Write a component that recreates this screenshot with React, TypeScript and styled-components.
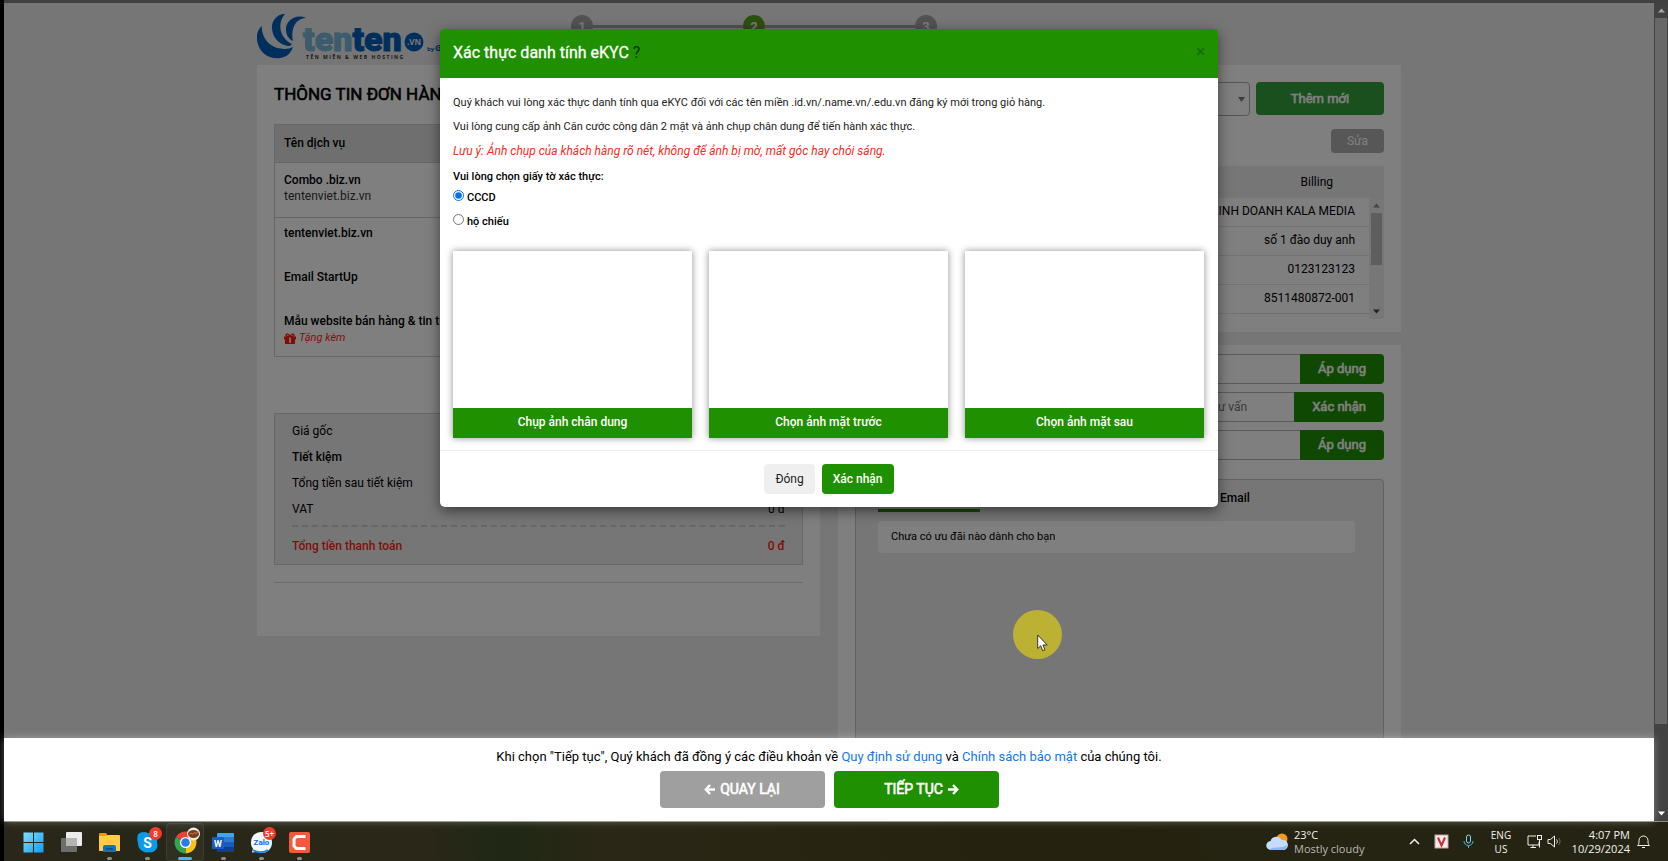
import React from 'react';
import styled, { createGlobalStyle, css } from 'styled-components';

const green = '#1f9000';

/* Regular-width Roboto thickened by an outline */
const thick = css`
  font-weight: 400;
  -webkit-text-stroke: 0.6px currentColor;
`;

const GlobalStyle = createGlobalStyle`
  *, *::before, *::after { box-sizing: border-box; }
  body { margin: 0; background: #000; overflow: hidden; }
  body, button, input, select { font-family: Roboto, "Liberation Sans", sans-serif; }
  p, h1, h2 { margin: 0; }
  button { border: 0; padding: 0; cursor: pointer; }
`;

const Screen = styled.div`
  display: flex;
  flex-direction: column;
  height: 100vh;
  padding-left: 4px;
  background: #000;
`;

const Browser = styled.div`
  position: relative;
  flex: 1;
  min-height: 0;
  display: flex;
  border-top: 3px solid #404040;
  border-bottom: 1px solid #8a8a80;
`;

const Viewport = styled.div`
  position: relative;
  flex: 1;
  min-width: 0;
  display: flex;
  flex-direction: column;
  background: #ececec;
`;

const Page = styled.div`
  flex: 1;
  min-height: 0;
  overflow: hidden;
`;

const Container = styled.div`
  max-width: 1144px;
  margin: 0 auto;
`;

const Header = styled.header`
  display: flex;
  height: 62px;
`;

const Logo = styled.a`
  width: 314px;
  padding-top: 5px;
  svg { display: block; }
`;

const Steps = styled.ol`
  display: flex;
  align-items: center;
  height: 22px;
  margin: 12px 0 0;
  padding: 0;
  list-style: none;
`;

const Step = styled.li<{ $active?: boolean }>`
  width: 22px;
  height: 22px;
  border-radius: 50%;
  background: ${(p) => (p.$active ? '#56a31c' : '#a5a5a5')};
  color: #f4f4f4;
  font-size: 13px;
  font-weight: 700;
  line-height: 23px;
  text-align: center;
`;

const StepLine = styled.li`
  width: 150px;
  height: 3px;
  background: #a5a5a5;
`;

const Columns = styled.main`
  display: flex;
  align-items: flex-start;
  gap: 18px;
`;

const Column = styled.div`
  flex: 1;
  min-width: 0;
  display: flex;
  flex-direction: column;
  gap: 13px;
`;

const OrderPanel = styled.section`
  padding: 18px 17px 53px;
  background: #fff;
`;

const OrderTitle = styled.h1`
  margin-bottom: 19px;
  font-size: 17px;
  line-height: 22px;
  ${thick}
`;

const OrderTable = styled.table`
  width: 100%;
  border: 1px solid #cfcfcf;
  border-spacing: 0;
  font-size: 12px;
  line-height: 16px;
  th {
    height: 38px;
    padding: 0 9px 2px;
    background: #dedede;
    border-bottom: 1px solid #cfcfcf;
    font-weight: 500;
    text-align: left;
  }
  td {
    padding: 9px 9px 13px;
    vertical-align: top;
  }
  tr + tr td { border-top: 1px solid #cfcfcf; padding: 7px 9px 9px; }
`;

const Service = styled.div`
  font-weight: 500;
  & + & { margin-top: 28px; }
`;

const ServiceNote = styled.div`
  color: #333;
  font-weight: 400;
`;

const GiftNote = styled.div`
  display: flex;
  align-items: center;
  gap: 3px;
  color: #ff1f0c;
  font-weight: 400;
  font-size: 11px;
  font-style: italic;
  line-height: 18px;
`;

const Summary = styled.dl`
  margin: 56px 0 17px;
  padding: 4px 17px 0;
  background: #ececec;
  border: 1px solid #cfcfcf;
  font-size: 12px;
`;

const SummaryRow = styled.div<{ $strong?: boolean; $total?: boolean }>`
  display: flex;
  align-items: center;
  justify-content: space-between;
  height: 26px;
  font-weight: ${(p) => (p.$strong ? 500 : 400)};
  dd { margin: 0; }
  ${(p) =>
    p.$total &&
    css`
      height: 39px;
      margin-top: 3px;
      border-top: 2px dashed #cfcfcf;
      color: #ff1f0c;
      font-weight: 500;
    `}
`;

const Rule = styled.hr`
  margin: 0;
  border: 0;
  border-top: 1px solid #d9d9d9;
`;

const ContactPanel = styled.section`
  padding: 17px 17px 13px;
  background: #fff;
`;

const ContactTop = styled.div`
  display: flex;
  gap: 6px;
`;

const Select = styled.select`
  flex: 1;
  height: 34px;
  appearance: none;
  border: 1px solid #aaa;
  border-radius: 4px;
  background: #fff;
`;

const SelectWrap = styled.div`
  position: relative;
  flex: 1;
  display: flex;
`;

const SelectArrow = styled.svg`
  position: absolute;
  right: 5px;
  top: 15px;
  width: 7px;
  height: 5px;
`;

const AddButton = styled.button`
  width: 128px;
  height: 33px;
  border-radius: 4px;
  background: #34a03a;
  color: #fff;
  font-size: 13px;
  ${thick}
`;

const EditButton = styled.button`
  display: block;
  width: 53px;
  height: 24px;
  margin: 13px 0 13px auto;
  border-radius: 4px;
  background: #aeaeae;
  color: #fff;
  font-size: 12px;
`;

const ContactTable = styled.div`
  font-size: 12px;
`;

const ContactHead = styled.div`
  height: 32px;
  padding-right: 51px;
  background: #ececec;
  line-height: 32px;
  text-align: right;
`;

const ContactScroll = styled.div`
  display: flex;
  height: 121px;
  overflow: hidden;
`;

const ContactList = styled.ul`
  flex: 1;
  margin: 0;
  padding: 0;
  list-style: none;
  li {
    height: 29px;
    padding-right: 14px;
    border-bottom: 1px solid #e4e4e4;
    line-height: 27px;
    text-align: right;
  }
`;

const Bar = styled.div<{ $dark?: boolean }>`
  display: flex;
  flex-direction: column;
  align-items: center;
  justify-content: space-between;
  width: ${(p) => (p.$dark ? 14 : 15)}px;
  background: ${(p) => (p.$dark ? '#424242' : '#eee')};
  svg { flex: none; width: 7px; height: 5px; margin: 5px 0; }
`;

const Thumb = styled.div<{ $dark?: boolean }>`
  flex: none;
  width: ${(p) => (p.$dark ? 12 : 11)}px;
  height: ${(p) => (p.$dark ? 'auto' : '52px')};
  margin-bottom: ${(p) => (p.$dark ? 82 : 39)}px;
  background: ${(p) => (p.$dark ? '#686868' : '#bcbcbc')};
  ${(p) => p.$dark && 'flex: 1;'}
`;

const OfferPanel = styled.section`
  padding: 9px 17px 40px;
  background: #fff;
`;

const Codes = styled.div`
  display: grid;
  gap: 8px;
`;

const CodeRow = styled.form`
  display: flex;
  height: 30px;
`;

const CodeInput = styled.input`
  flex: 1;
  min-width: 0;
  padding: 0 47px 0 12px;
  border: 1px solid #b4b4b4;
  border-right: 0;
  border-radius: 4px 0 0 4px;
  background: #fff;
  font-size: 12px;
  text-align: right;
`;

const CodeButton = styled.button`
  padding: 0 18px 1px;
  border-radius: 0 4px 4px 0;
  background: ${green};
  color: #fff;
  font-size: 13px;
  ${thick}
`;

const Offers = styled.div`
  min-height: 300px;
  margin-top: 19px;
  padding: 0 28px 0 22px;
  border: 1px solid #c4c4c4;
  border-radius: 4px;
  background: #ececec;
  font-size: 11px;
`;

const Tabs = styled.div`
  display: flex;
`;

const Tab = styled.button<{ $active?: boolean }>`
  width: 102px;
  height: 32px;
  padding-top: 6px;
  background: none;
  border-bottom: 3px solid ${(p) => (p.$active ? green : 'transparent')};
  font-size: 12px;
  font-weight: 500;
`;

const Offer = styled.p`
  margin-top: 9px;
  padding: 0 13px;
  border-radius: 4px;
  background: #fff;
  line-height: 32px;
`;

const Overlay = styled.div`
  position: absolute;
  inset: 0;
  display: flex;
  justify-content: center;
  align-items: flex-start;
  padding-top: 26px;
  background: rgba(0, 0, 0, 0.5);
`;

const Modal = styled.div`
  width: 778px;
  border-radius: 5px;
  background: #fff;
  box-shadow: 0 4px 13px rgba(0, 0, 0, 0.5);
  font-size: 11px;
  color: #222;
`;

const ModalHead = styled.div`
  display: flex;
  align-items: center;
  justify-content: space-between;
  height: 49px;
  padding: 0 13px 2px;
  border-radius: 4px 4px 0 0;
  background: ${green};
`;

const ModalTitle = styled.h2`
  color: #fff;
  font-size: 16px;
  font-weight: 400;
  -webkit-text-stroke: 0.3px currentColor;
  span { color: #0b3300; -webkit-text-stroke: 0; }
`;

const Close = styled.button`
  height: 24px;
  margin-bottom: 4px;
  background: none;
  color: #176c00;
  font-size: 17px;
  font-weight: 500;
  line-height: 24px;
`;

const ModalBody = styled.div`
  padding: 17px 14px 12px 13px;
  border-bottom: 1px solid #ececec;
`;

const Line = styled.p<{ $warn?: boolean }>`
  margin-bottom: 8px;
  line-height: ${(p) => (p.$warn ? 17 : 16)}px;
  ${(p) => p.$warn && 'color: #f0301c; font-size: 12px; font-style: italic;'}
`;

const Choices = styled.fieldset`
  margin: 0 0 18px;
  padding: 0;
  border: 0;
  font-weight: 500;
  color: #000;
  legend { padding: 0; line-height: 17px; }
  label { display: flex; align-items: center; gap: 3px; height: 24px; }
  input { width: 11px; height: 11px; margin: 0 0 3px; accent-color: #0b6ef6; }
`;

const Cards = styled.div`
  display: flex;
  gap: 17px;
`;

const Card = styled.div`
  flex: 1;
  padding-top: 157px;
  background: #fff;
  box-shadow: 0 0 7px rgba(0, 0, 0, 0.45);
`;

const CardButton = styled.button`
  display: block;
  width: 100%;
  height: 30px;
  padding-bottom: 2px;
  background: ${green};
  color: #fff;
  font-size: 12px;
  font-weight: 500;
`;

const ModalFoot = styled.div`
  display: flex;
  justify-content: center;
  gap: 7px;
  padding: 13px;
`;

const FootButton = styled.button<{ $primary?: boolean }>`
  height: 30px;
  padding: 0 11px;
  border-radius: 4px;
  background: ${(p) => (p.$primary ? green : '#efefef')};
  color: ${(p) => (p.$primary ? '#fff' : '#222')};
  font-size: 12px;
  font-weight: ${(p) => (p.$primary ? 500 : 400)};
`;

const ActionBar = styled.footer`
  position: relative;
  z-index: 1;
  height: 83px;
  padding-top: 10px;
  background: #fff;
  box-shadow: 0 0 8px rgba(255, 255, 255, 0.35);
  font-size: 13px;
  line-height: 18px;
  text-align: center;
  a { color: #1278e8; text-decoration: none; }
`;

const Actions = styled.div`
  display: flex;
  justify-content: center;
  gap: 9px;
  margin-top: 5px;
`;

const ActionButton = styled.button<{ $back?: boolean }>`
  display: flex;
  align-items: center;
  justify-content: center;
  gap: 5px;
  width: 165px;
  height: 37px;
  padding-bottom: 1px;
  padding-left: ${(p) => (p.$back ? 0 : 11)}px;
  border-radius: 4px;
  background: ${(p) => (p.$back ? '#9f9f9f' : green)};
  color: #fff;
  font-size: 14px;
  ${thick}
  svg { fill: none; stroke: currentColor; stroke-width: 2.4; }
`;

const Pointer = styled.div`
  position: absolute;
  z-index: 2;
  left: 1009px;
  top: 607px;
  width: 49px;
  height: 49px;
  border-radius: 50%;
  background: #bcb133;
  svg { position: absolute; left: 24px; top: 24px; }
`;

const Taskbar = styled.div`
  display: flex;
  align-items: center;
  justify-content: space-between;
  height: 39px;
  margin-left: -4px;
  padding: 0 17px 0 10px;
  background: linear-gradient(90deg, #2b2718 0, #262719 8%, #2b2718 25%, #1f2814 30%, #2a2716 36%, #25220f 60%, #252414 100%);
  border-left: 4px solid #000;
  color: #f2f2f2;
  font: 400 11px/14px "Open Sans", sans-serif;
`;

const Apps = styled.div`
  display: flex;
`;

const AppButton = styled.button<{ $open?: boolean; $active?: boolean }>`
  position: relative;
  display: flex;
  flex-direction: column;
  align-items: center;
  width: 38px;
  height: 38px;
  padding-top: 8px;
  background: none;
  svg { width: 23px; height: 23px; overflow: visible; }
  &::after {
    content: '';
    width: ${(p) => (p.$active ? 14 : 5)}px;
    height: 3px;
    margin-top: 3px;
    border-radius: 2px;
    background: ${(p) => (p.$active ? '#4cb4f0' : p.$open ? '#8f8d84' : 'transparent')};
  }
  ${(p) =>
    p.$active &&
    css`
      border-radius: 4px;
      box-shadow: inset 0 0 0 1px rgba(255, 255, 255, 0.07);
      background: rgba(255, 255, 255, 0.04);
    `}
`;

const Badge = styled.span`
  position: absolute;
  right: 4px;
  top: 4px;
  width: 13px;
  height: 13px;
  border-radius: 50%;
  background: #f33b2c;
  color: #fff;
  font: 600 8px/13px "Open Sans", sans-serif;
  text-align: center;
`;

const Tray = styled.div`
  display: flex;
  align-items: center;
`;

const Weather = styled.div`
  display: flex;
  align-items: center;
  gap: 5px;
  width: 141px;
  span { color: #b9b9b3; }
`;

const TrayIcon = styled.svg<{ $gap?: number }>`
  flex: none;
  width: 15px;
  height: 15px;
  fill: none;
  stroke: #f0f0f0;
  stroke-width: 1;
  margin-right: ${(p) => p.$gap ?? 12}px;
`;

const Lang = styled.div`
  width: 26px;
  margin-right: 13px;
  font-size: 10px;
  text-align: center;
`;

const Clock = styled.div`
  width: 65px;
  margin-right: 6px;
  text-align: right;
  white-space: nowrap;
`;

const Triangle = ({ up, color }: { up?: boolean; color: string }) => (
  <svg viewBox="0 0 7 5" aria-hidden="true">
    <path d={up ? 'M3.500.500 7 4.500H0z' : 'M3.500 4.500 7 .500H0z'} fill={color} />
  </svg>
);

const Gift = () => (
  <svg width="12" height="11" viewBox="0 0 12 11" aria-hidden="true">
    <path d="M0 3.500h12v3h-1V11H1V6.500H0z" fill="currentColor" />
    <path d="M6 3.500C4 3.500 2 3.500 2 2.200S4.500.200 6 3.500c1.500-3.300 4-2.600 4-1.300S8 3.500 6 3.500z" fill="none" stroke="currentColor" strokeWidth="1.300" />
    <path d="M5.200 4.500h1.600v5.500H5.200z" fill="#fff" />
  </svg>
);

const contacts = ['KINH DOANH KALA MEDIA', 'số 1 đào duy anh', '0123123123', '8511480872-001', ''];
const codes = [
  { label: 'Mã giảm giá', placeholder: '', action: 'Áp dụng' },
  { label: 'Mã tư vấn', placeholder: 'Mã nhân viên tư vấn', action: 'Xác nhận' },
  { label: 'Mã đối tác', placeholder: '', action: 'Áp dụng' },
];
const photos = ['Chụp ảnh chân dung', 'Chọn ảnh mặt trước', 'Chọn ảnh mặt sau'];

function TentenLogo() {
  return (
    <svg width="187" height="54" viewBox="3 0 187 54">
      <g fill="#005ebc">
        <path d="M7.700 18C1 24 2 34 6 41 11 49 20 51 26 50 33 49 37 45 39 39 30 44 8 40 7.700 18z" />
        <path d="M31 5.700C22 6 17 14 18 21 19 31 27 38 36 38L38 36C27 31 22 17 31 5.700z" />
        <path d="M52 10C41 5 31 14 32 22 32 27 35 31 39 33 37 22 40 11 52 10z" />
        <circle cx="160" cy="34" r="9.500" />
      </g>
      <g fontFamily="Roboto, sans-serif" fontWeight="900" fontSize="34">
        <text x="49" y="43" fill="#78b9da" stroke="#78b9da">
          ten<tspan fill="#005ebc" stroke="#005ebc">ten</tspan>
        </text>
      </g>
      <g fontFamily="Open Sans, sans-serif" fontWeight="700">
        <text x="160" y="37" fontSize="8" fill="#ececec" textAnchor="middle">.VN</text>
        <text x="173" y="43" fontSize="6" fill="#005ebc">by</text>
        <text x="181" y="43" fontSize="9" fill="#005ebc">G</text>
        <text x="52" y="51" fontSize="5" fill="#333" letterSpacing="1.500">TÊN MIỀN &amp; WEB HOSTING</text>
      </g>
    </svg>
  );
}

function TaskbarApps() {
  return (
    <Apps>
      <AppButton aria-label="Start">
        <svg viewBox="0 0 23 23">
          <defs>
            <linearGradient id="win" x1="0" y1="0" x2="1" y2="1">
              <stop offset="0" stopColor="#7fe0fb" />
              <stop offset="1" stopColor="#109af5" />
            </linearGradient>
          </defs>
          <path fill="url(#win)" d="M1.500 1.500h9.500v9.500H1.500zM12 1.500h9.500v9.500H12zM1.500 12h9.500v9.500H1.500zM12 12h9.500v9.500H12z" />
        </svg>
      </AppButton>
      <AppButton aria-label="Task view">
        <svg viewBox="0 0 23 23">
          <rect x="6" y="1" width="16" height="14" rx="1" fill="#ececec" />
          <rect x="1" y="7" width="16" height="14" rx="1" fill="#6d6d6d" />
          <path d="M6 7h11v8H6z" fill="#b4b4b4" />
        </svg>
      </AppButton>
      <AppButton $open aria-label="File Explorer">
        <svg viewBox="0 0 23 23">
          <path d="M1 3a1 1 0 0 1 1-1h6l2 3H1z" fill="#e59a0c" />
          <path d="M1 5h6l3-1h11a1 1 0 0 1 1 1v15H1z" fill="#ffcd45" />
          <path d="M5 21v-5a2 2 0 0 1 2-2h9a2 2 0 0 1 2 2v5z" fill="#0f72bd" />
          <path d="M8 17h7v1.500H8z" fill="#0a4a86" />
        </svg>
      </AppButton>
      <AppButton $open aria-label="Skype">
        <svg viewBox="0 0 23 23">
          <path d="M2 3.500C5 .500 9 .500 12 2c6 0 10 5 9 10 1.500 4-1 9-6 9.500-2-.500-2 0-4 0C5 21 2 17 2 12 1 9 1 6 2 3.500z" fill="#0a9ae8" />
          <text x="11.500" y="17" fontSize="14" fontWeight="700" fill="#fff" textAnchor="middle">S</text>
        </svg>
        <Badge>8</Badge>
      </AppButton>
      <AppButton $open $active aria-label="Chrome">
        <svg viewBox="0 0 23 23">
          <path d="M11.500 11.500 2 6A11 11 0 0 1 21 6z" fill="#e94335" />
          <path d="M11.500 11.500 21 6a11 11 0 0 1-9.500 16.500z" fill="#fbc116" />
          <path d="M11.500 11.500 11.500 22.500A11 11 0 0 1 2 6z" fill="#34a353" />
          <circle cx="11.500" cy="11.500" r="5.500" fill="#fff" />
          <circle cx="11.500" cy="11.500" r="4.300" fill="#2a7de9" />
          <circle cx="19.500" cy="3" r="6.500" fill="#f1ece0" />
          <ellipse cx="19.500" cy="3" rx="5.500" ry="4" fill="#7d3c1c" />
          <path d="M15.500 3.500c2-3 3 1 4-1s2 1 4-1" stroke="#d98a4e" fill="none" />
        </svg>
      </AppButton>
      <AppButton $open aria-label="Word">
        <svg viewBox="0 0 23 23">
          <path d="M6 2h15a1 1 0 0 1 1 1v3H5V3a1 1 0 0 1 1-1z" fill="#41a5ee" />
          <path d="M5 6h17v5H5z" fill="#2b7cd3" />
          <path d="M5 11h17v5H5z" fill="#185abd" />
          <path d="M5 16h17v4a1 1 0 0 1-1 1H6a1 1 0 0 1-1-1z" fill="#103f91" />
          <rect x="0" y="6" width="12" height="12" rx="1" fill="#1a5dbe" />
          <text x="6" y="15.500" fontSize="9" fontWeight="700" fill="#fff" textAnchor="middle">W</text>
        </svg>
      </AppButton>
      <AppButton $open aria-label="Zalo">
        <svg viewBox="0 0 23 23">
          <path d="M11.500 1C18 1 22 5.500 22 11.500S17.500 22 11.500 22c-2 0-3.500-.500-5-1.200L2 21.500l1-4C1.500 16 1 14 1 11.500 1 5.500 5 1 11.500 1z" fill="#f4f9ff" />
          <text x="11.500" y="14" fontSize="8" fontWeight="700" fill="#0b68f5" textAnchor="middle">Zalo</text>
          <path d="M3 19c4 3 11 3 15 0" stroke="#1489f7" strokeWidth="2" fill="none" />
        </svg>
        <Badge>5+</Badge>
      </AppButton>
      <AppButton $open aria-label="Camtasia">
        <svg viewBox="0 0 23 23">
          <rect x="1" y="1" width="21" height="21" rx="2" fill="#f5593d" />
          <path d="M17.500 5.500H8.500L6 8v7l2.500 2.500h9" stroke="#fff" strokeWidth="3" fill="none" />
        </svg>
      </AppButton>
    </Apps>
  );
}

function TaskbarTray() {
  return (
    <Tray>
      <Weather>
        <svg width="23" height="20" viewBox="0 0 23 20" aria-hidden="true">
          <circle cx="16" cy="7" r="5.500" fill="#f59a1c" />
          <path d="M5 18a4.500 4.500 0 0 1-.500-9 6 6 0 0 1 11-1A5 5 0 0 1 18 18z" fill="#c6dcfb" />
          <path d="M3 17.500c4-3 12-1 18-4A5 5 0 0 1 17 18H5z" fill="#8cb6f4" />
        </svg>
        <div>
          23°C
          <br />
          <span>Mostly cloudy</span>
        </div>
      </Weather>
      <TrayIcon viewBox="0 0 15 15" $gap={12}>
        <path d="M3 10l4.500-4.500L12 10" strokeWidth="1.500" />
      </TrayIcon>
      <TrayIcon viewBox="0 0 15 15" $gap={12}>
        <rect x="1" y="1" width="13" height="13" fill="#fbeeee" stroke="#c9a0a0" />
        <path d="M4 3.500l3.500 8 3.500-8" stroke="#cf2b2b" strokeWidth="2" />
      </TrayIcon>
      <TrayIcon viewBox="0 0 15 15" $gap={12}>
        <rect x="5.500" y="1" width="4" height="8" rx="2" stroke="#7fd4f2" />
        <path d="M3 7c0 6 9 6 9 0M7.500 11.500V14" stroke="#4cb4e0" />
      </TrayIcon>
      <Lang>
        ENG
        <br />
        US
      </Lang>
      <TrayIcon viewBox="0 0 15 15" $gap={5}>
        <path d="M9 2H1v9h11V8M3.500 13.500H9M6 11v2.500M12.500 6v7.500" />
        <rect x="10.500" y="1.500" width="4" height="4" />
      </TrayIcon>
      <TrayIcon viewBox="0 0 15 15" $gap={3}>
        <path d="M1 5.500h2.500L7.500 2v11L3.500 9.500H1z" />
        <path d="M9.500 5.500c1 1 1 3 0 4" />
        <path d="M11.500 4c2 2 2 5 0 7" stroke="#77766c" />
      </TrayIcon>
      <Clock>
        4:07 PM
        <br />
        10/29/2024
      </Clock>
      <TrayIcon viewBox="0 0 15 15" $gap={0}>
        <path d="M1.500 11.500h12c-1.500-1-1.500-3-1.500-5a4.500 4.500 0 0 0-9 0c0 2 0 4-1.500 5zM6 13.500h3" />
      </TrayIcon>
    </Tray>
  );
}

export default function App() {
  return (
    <Screen>
      <GlobalStyle />
      <Browser>
        <Viewport>
          <Page>
            <Container>
              <Header>
                <Logo href="#">
                  <TentenLogo />
                </Logo>
                <Steps>
                  <Step>1</Step>
                  <StepLine aria-hidden="true" />
                  <Step $active>2</Step>
                  <StepLine aria-hidden="true" />
                  <Step>3</Step>
                </Steps>
              </Header>

              <Columns>
                <Column>
                  <OrderPanel>
                    <OrderTitle>THÔNG TIN ĐƠN HÀNG</OrderTitle>
                    <OrderTable>
                      <thead>
                        <tr>
                          <th>Tên dịch vụ</th>
                        </tr>
                      </thead>
                      <tbody>
                        <tr>
                          <td>
                            <Service>
                              Combo .biz.vn
                              <ServiceNote>tentenviet.biz.vn</ServiceNote>
                            </Service>
                          </td>
                        </tr>
                        <tr>
                          <td>
                            <Service>tentenviet.biz.vn</Service>
                            <Service>Email StartUp</Service>
                            <Service>
                              Mẫu website bán hàng &amp; tin tức
                              <GiftNote>
                                <Gift /> Tặng kèm
                              </GiftNote>
                            </Service>
                          </td>
                        </tr>
                      </tbody>
                    </OrderTable>
                    <Summary>
                      <SummaryRow>
                        <dt>Giá gốc</dt>
                      </SummaryRow>
                      <SummaryRow $strong>
                        <dt>Tiết kiệm</dt>
                      </SummaryRow>
                      <SummaryRow>
                        <dt>Tổng tiền sau tiết kiệm</dt>
                      </SummaryRow>
                      <SummaryRow>
                        <dt>VAT</dt>
                        <dd>0 đ</dd>
                      </SummaryRow>
                      <SummaryRow $total>
                        <dt>Tổng tiền thanh toán</dt>
                        <dd>0 đ</dd>
                      </SummaryRow>
                    </Summary>
                    <Rule />
                  </OrderPanel>
                </Column>

                <Column>
                  <ContactPanel>
                    <ContactTop>
                      <SelectWrap>
                        <Select aria-label="Hồ sơ" />
                        <SelectArrow viewBox="0 0 7 5" aria-hidden="true">
                          <path d="M0 0h7L3.500 5z" fill="#777" />
                        </SelectArrow>
                      </SelectWrap>
                      <AddButton>Thêm mới</AddButton>
                    </ContactTop>
                    <EditButton>Sửa</EditButton>
                    <ContactTable>
                      <ContactHead>Billing</ContactHead>
                      <ContactScroll>
                        <ContactList>
                          {contacts.map((c, i) => (
                            <li key={i}>{c}</li>
                          ))}
                        </ContactList>
                        <Bar>
                          <Triangle up color="#8a8a8a" />
                          <Thumb />
                          <Triangle color="#444" />
                        </Bar>
                      </ContactScroll>
                    </ContactTable>
                  </ContactPanel>

                  <OfferPanel>
                    <Codes>
                      {codes.map((c) => (
                        <CodeRow key={c.label}>
                          <CodeInput aria-label={c.label} placeholder={c.placeholder} />
                          <CodeButton type="button">{c.action}</CodeButton>
                        </CodeRow>
                      ))}
                    </Codes>
                    <Offers>
                      <Tabs>
                        <Tab $active aria-label="Tên miền" />
                        <Tab aria-label="Hosting" />
                        <Tab aria-label="Website" />
                        <Tab>Email</Tab>
                      </Tabs>
                      <Offer>Chưa có ưu đãi nào dành cho bạn</Offer>
                    </Offers>
                  </OfferPanel>
                </Column>
              </Columns>
            </Container>
          </Page>

          <Overlay>
            <Modal role="dialog" aria-labelledby="ekyc-title">
              <ModalHead>
                <ModalTitle id="ekyc-title">
                  Xác thực danh tính eKYC <span>?</span>
                </ModalTitle>
                <Close aria-label="Close">×</Close>
              </ModalHead>
              <ModalBody>
                <Line>
                  Quý khách vui lòng xác thực danh tính qua eKYC đối với các tên miền .id.vn/.name.vn/.edu.vn đăng ký mới trong giỏ hàng.
                </Line>
                <Line>Vui lòng cung cấp ảnh Căn cước công dân 2 mặt và ảnh chụp chân dung để tiến hành xác thực.</Line>
                <Line $warn>Lưu ý: Ảnh chụp của khách hàng rõ nét, không để ảnh bị mờ, mất góc hay chói sáng.</Line>
                <Choices>
                  <legend>Vui lòng chọn giấy tờ xác thực:</legend>
                  <label>
                    <input type="radio" name="paper" defaultChecked /> CCCD
                  </label>
                  <label>
                    <input type="radio" name="paper" /> hộ chiếu
                  </label>
                </Choices>
                <Cards>
                  {photos.map((p) => (
                    <Card key={p}>
                      <CardButton>{p}</CardButton>
                    </Card>
                  ))}
                </Cards>
              </ModalBody>
              <ModalFoot>
                <FootButton>Đóng</FootButton>
                <FootButton $primary>Xác nhận</FootButton>
              </ModalFoot>
            </Modal>
          </Overlay>

          <ActionBar>
            <p>
              Khi chọn "Tiếp tục", Quý khách đã đồng ý các điều khoản về <a href="#">Quy định sử dụng</a> và{' '}
              <a href="#">Chính sách bảo mật</a> của chúng tôi.
            </p>
            <Actions>
              <ActionButton $back>
                <svg width="11" height="11" viewBox="0 0 11 11" aria-hidden="true">
                  <path d="M6 1L1.800 5.500 6 10M2 5.500h9" />
                </svg>
                QUAY LẠI
              </ActionButton>
              <ActionButton>
                TIẾP TỤC
                <svg width="11" height="11" viewBox="0 0 11 11" aria-hidden="true">
                  <path d="M5 1l4.200 4.500L5 10M9 5.500H0" />
                </svg>
              </ActionButton>
            </Actions>
          </ActionBar>

          <Pointer aria-hidden="true">
            <svg width="12" height="18" viewBox="0 0 12 18">
              <path d="M.700 1v13.500l3-2.800 2 5 2.200-1-2-4.700h4.300z" fill="#fff" stroke="#222" strokeWidth=".9" />
            </svg>
          </Pointer>
        </Viewport>
        <Bar $dark>
          <Triangle up color="#a5a5a5" />
          <Thumb $dark />
          <Triangle color="#fff" />
        </Bar>
      </Browser>
      <Taskbar>
        <TaskbarApps />
        <TaskbarTray />
      </Taskbar>
    </Screen>
  );
}
